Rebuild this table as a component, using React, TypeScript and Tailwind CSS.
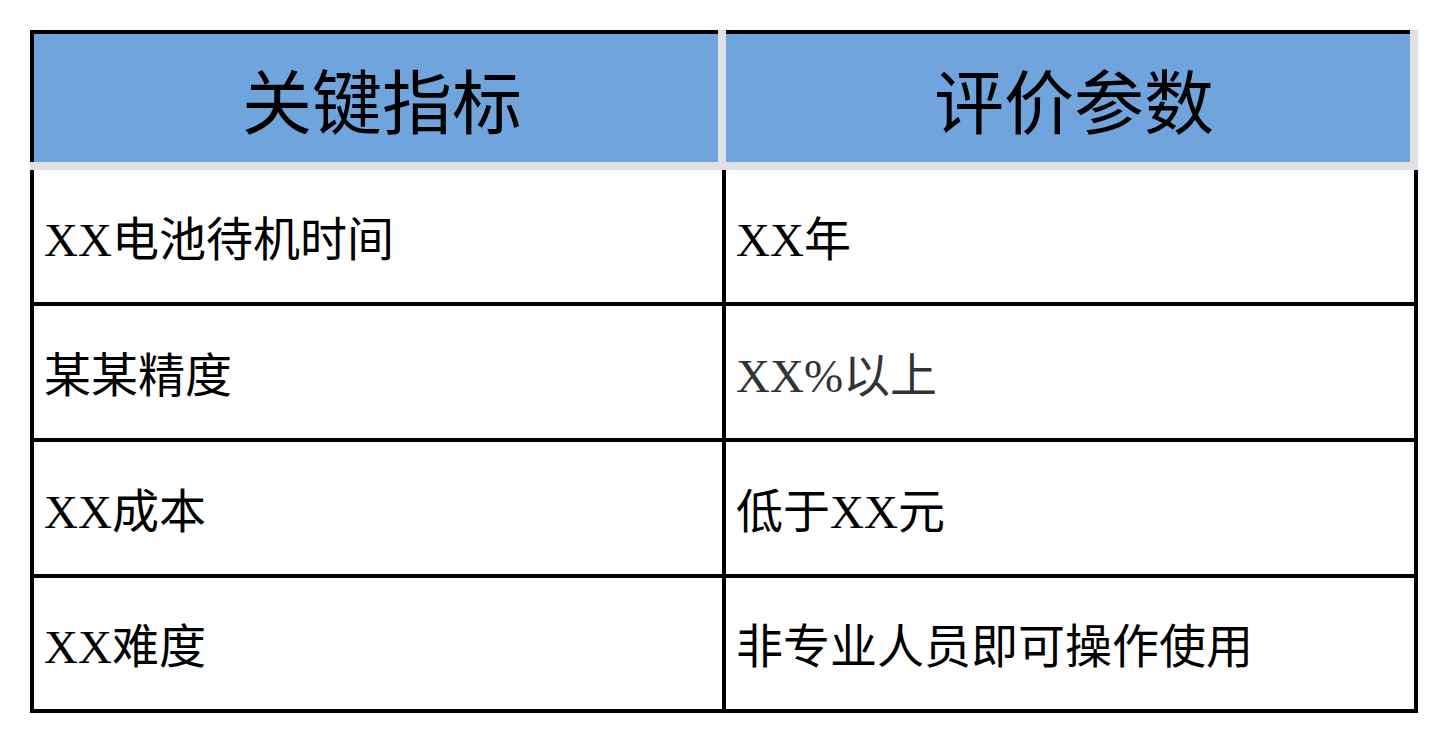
import React from "react";

const font = { fontFamily: '"Liberation Serif", "Noto Sans CJK SC", serif' };

const rows: { a: string; b: string; gray?: boolean }[] = [
  { a: "XX电池待机时间", b: "XX年" },
  { a: "某某精度", b: "XX%以上", gray: true },
  { a: "XX成本", b: "低于XX元" },
  { a: "XX难度", b: "非专业人员即可操作使用" },
];

export default function App() {
  return (
    <div className="w-[1448px] h-[744px] bg-white" style={font}>
      <div className="w-[1388px] ml-[30px] pt-[30px]">
        <div className="flex h-[140px] bg-[#dfe0e3] pr-2 pb-2 gap-2">
          <div className="w-[688px] border-t-4 border-l-4 border-black bg-[#6fa4dc] flex items-center justify-center pt-4 pl-3 text-[70px] leading-none text-black">
            关键指标
          </div>
          <div className="flex-1 border-t-4 border-black bg-[#6fa4dc] flex items-center justify-center pt-4 pl-3 text-[70px] leading-none text-black">
            评价参数
          </div>
        </div>
        <div className="border-l-4 border-r-4 border-black">
          {rows.map((r, i) => (
            <div
              key={i}
              className={
                "flex border-b-4 border-black " +
                (i === rows.length - 1 ? "h-[135px]" : "h-[136px]")
              }
            >
              <div className="w-[692px] border-r-4 border-black flex items-center pl-[10px] pt-2 text-[47px] leading-none text-black">
                {r.a}
              </div>
              <div
                className={
                  "flex-1 flex items-center pl-[10px] pt-2 text-[47px] leading-none " +
                  (r.gray ? "text-[#333333]" : "text-black")
                }
              >
                {r.b}
              </div>
            </div>
          ))}
        </div>
      </div>
    </div>
  );
}
